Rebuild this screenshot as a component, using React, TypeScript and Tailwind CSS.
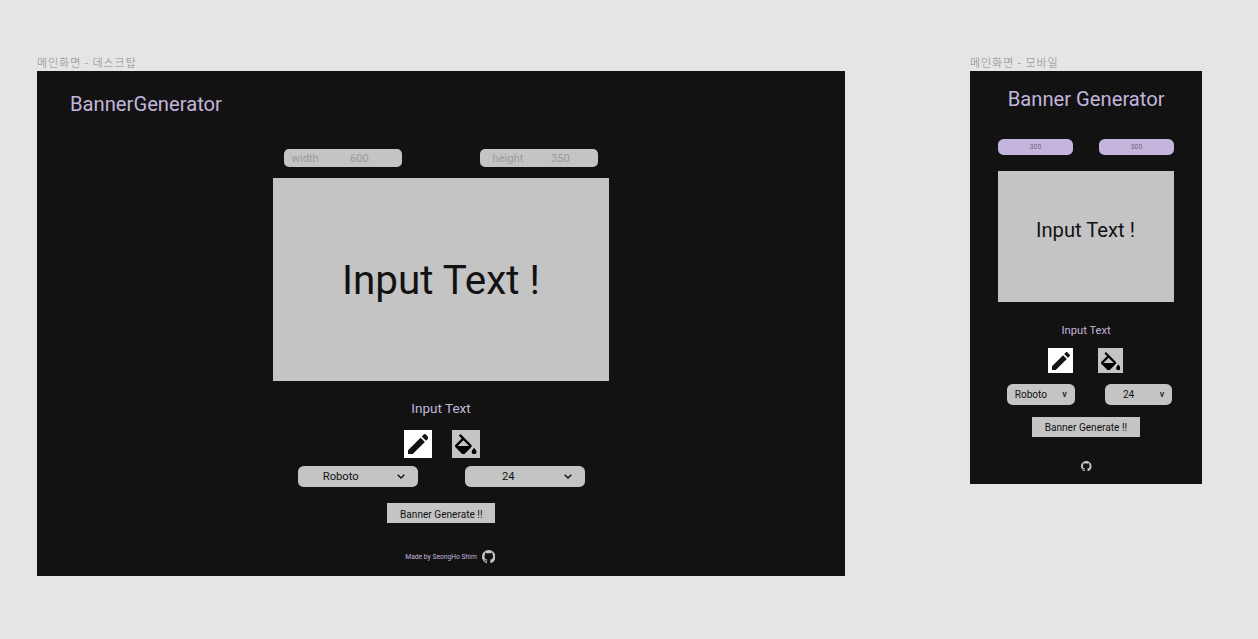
import type { ReactNode } from 'react';

function PencilIcon({ className }: { className: string }) {
  return (
    <svg viewBox="3 3 18 18" className={className} fill="#121212">
      <path d="M3 17.25V21h3.75L17.81 9.94l-3.75-3.75L3 17.25zM20.71 7.04a1 1 0 0 0 0-1.41l-2.34-2.34a1 1 0 0 0-1.41 0l-1.83 1.83 3.75 3.75 1.83-1.83z" />
    </svg>
  );
}

function FillIcon({ className }: { className: string }) {
  return (
    <svg viewBox="3 0 18 17" className={className} fill="#000">
      <path d="M16.56 8.94L7.62 0 6.21 1.41l2.38 2.38-5.15 5.15a1.49 1.49 0 0 0 0 2.12l5.5 5.5c.29.29.68.44 1.06.44s.77-.15 1.06-.44l5.5-5.5c.59-.58.59-1.53 0-2.12zM5.21 10L10 5.21 14.79 10H5.21zM19 11.5s-2 2.17-2 3.5c0 1.1.9 2 2 2s2-.9 2-2c0-1.33-2-3.5-2-3.5z" />
    </svg>
  );
}

function GithubIcon({ className }: { className: string }) {
  return (
    <svg viewBox="0 0 16 16" className={className} fill="#c4c4c4">
      <path d="M8 0C3.58 0 0 3.58 0 8c0 3.54 2.29 6.53 5.47 7.59.4.07.55-.17.55-.38 0-.19-.01-.82-.01-1.49-2.01.37-2.53-.49-2.69-.94-.09-.23-.48-.94-.82-1.13-.28-.15-.68-.52-.01-.53.63-.01 1.08.58 1.23.82.72 1.21 1.87.87 2.33.66.07-.52.28-.87.51-1.07-1.78-.2-3.64-.89-3.64-3.95 0-.87.31-1.59.82-2.15-.08-.2-.36-1.02.08-2.12 0 0 .67-.21 2.2.82.64-.18 1.32-.27 2-.27s1.36.09 2 .27c1.53-1.04 2.2-.82 2.2-.82.44 1.1.16 1.92.08 2.12.51.56.82 1.27.82 2.15 0 3.07-1.87 3.75-3.65 3.95.29.25.54.73.54 1.48 0 1.07-.01 1.93-.01 2.2 0 .21.15.46.55.38A8.01 8.01 0 0 0 16 8c0-4.42-3.58-8-8-8z" />
    </svg>
  );
}

function Chevron({ className }: { className: string }) {
  return (
    <svg viewBox="0 0 8 5" className={className} fill="none" stroke="#121212" strokeWidth="1.4">
      <path d="M.7.7 4 4 7.3.7" />
    </svg>
  );
}

function Frame({ name, children }: { name: string; children: ReactNode }) {
  return (
    <section>
      <h2 className="h-[16px] whitespace-nowrap font-['Noto_Sans_CJK_KR',sans-serif] text-[11px] font-light leading-[15px] tracking-[0.93px] text-[#858585]">
        {name}
      </h2>
      {children}
    </section>
  );
}

function Desktop() {
  return (
    <div className="flex h-[505px] w-[808px] flex-col bg-[#121212] pt-[22px]">
      <h1 className="ml-[33px] h-6 text-[20.2px] leading-[23px] text-[#c4b5dd]">BannerGenerator</h1>
      <div className="ml-[247px] mt-[32px] flex gap-[77.5px] text-[11.2px] leading-[19px] text-[#9b9b9b]">
        <div className="flex h-[17.5px] w-[118px] rounded-[5px] bg-[#c4c4c4] pl-[7.5px]">
          <span className="w-[58.5px]">width</span>
          <span>600</span>
        </div>
        <div className="flex h-[17.5px] w-[118px] rounded-[5px] bg-[#c4c4c4] pl-[13px]">
          <span className="w-[58.5px]">height</span>
          <span>350</span>
        </div>
      </div>
      <div className="ml-[235.6px] mt-[11.9px] flex h-[202.6px] w-[336.7px] items-center justify-center bg-[#c4c4c4] pt-[2px] text-[40.4px] leading-[48px] text-[#121212]">
        Input Text !
      </div>
      <p className="mt-[19px] h-4 w-[808px] text-center text-[13.5px] leading-4 text-[#c4b5dd]">Input Text</p>
      <div className="ml-[367px] mt-[14px] flex gap-[19.4px]">
        <button className="flex size-[28.3px] items-center justify-center bg-white">
          <PencilIcon className="size-[20.5px]" />
        </button>
        <button className="flex size-[28.3px] items-center justify-center bg-[#c4c4c4]">
          <FillIcon className="h-[20.5px] w-[21.5px]" />
        </button>
      </div>
      <div className="ml-[261.3px] mt-[7.4px] flex gap-[47.3px] text-[11.2px] leading-[21.5px] text-[#121212]">
        <div className="flex h-[21.5px] w-[119.8px] items-center rounded-[5.6px] bg-[#c4c4c4] pl-[24.5px]">
          <span className="w-[74.5px]">Roboto</span>
          <Chevron className="h-[5px] w-[8px]" />
        </div>
        <div className="flex h-[21.5px] w-[119.8px] items-center rounded-[5.6px] bg-[#c4c4c4] pl-[36.5px]">
          <span className="w-[62.5px]">24</span>
          <Chevron className="h-[5px] w-[8px]" />
        </div>
      </div>
      <button className="ml-[350.2px] mt-[15.8px] h-[19.7px] w-[108.2px] bg-[#c4c4c4] pt-[2px] text-[10.1px] leading-[20px] text-[#121212]">
        Banner Generate !!
      </button>
      <footer className="ml-[368.3px] mt-[26.8px] flex h-[14px] items-center gap-[5px] text-[6.73px] leading-[14px] text-[#c4b5dd]">
        <span className="pt-[2px]">Made by SeongHo Shim</span>
        <GithubIcon className="size-[13.5px]" />
      </footer>
    </div>
  );
}

function Mobile() {
  return (
    <div className="flex h-[413px] w-[232.3px] flex-col bg-[#121212] pt-[16px]">
      <h1 className="h-6 text-center text-[20.2px] leading-6 text-[#c4b5dd]">Banner Generator</h1>
      <div className="ml-[28px] mt-[28.3px] flex gap-[26px] text-center text-[6.73px] leading-[17.5px] text-[#6d6780]">
        <div className="h-[16px] w-[75px] rounded-[5.6px] bg-[#c4b5dd]">300</div>
        <div className="h-[16px] w-[75px] rounded-[5.6px] bg-[#c4b5dd]">300</div>
      </div>
      <div className="ml-[28px] mt-[16px] flex h-[130.8px] w-[175.8px] justify-center bg-[#c4c4c4] pr-px pt-[47px] text-[20.2px] leading-6 text-[#121212]">
        Input Text !
      </div>
      <p className="mt-[21px] h-4 text-center text-[11.2px] leading-4 text-[#c4b5dd]">Input Text</p>
      <div className="ml-[78px] mt-[9px] flex gap-[24.5px]">
        <button className="flex size-[25.4px] items-center justify-center bg-white">
          <PencilIcon className="size-[18px]" />
        </button>
        <button className="flex size-[25.4px] items-center justify-center bg-[#c4c4c4]">
          <FillIcon className="h-[18.5px] w-[19.5px]" />
        </button>
      </div>
      <div className="ml-[37px] mt-[10.5px] flex gap-[30px] text-[10.1px] leading-[21.5px] text-[#121212]">
        <div className="flex h-[21.5px] w-[67.5px] rounded-[5.6px] bg-[#c4c4c4] pl-[7.7px]">
          <span className="w-[47.5px]">Roboto</span>
          <span className="text-[9px] font-medium">v</span>
        </div>
        <div className="flex h-[21.5px] w-[67.5px] rounded-[5.6px] bg-[#c4c4c4] pl-[18.4px]">
          <span className="w-[36.8px]">24</span>
          <span className="text-[9px] font-medium">v</span>
        </div>
      </div>
      <button className="ml-[61.8px] mt-[11.5px] h-[19.7px] w-[108.2px] bg-[#c4c4c4] pt-px text-[10.1px] leading-[20px] text-[#121212]">
        Banner Generate !!
      </button>
      <GithubIcon className="ml-[111px] mt-[24px] size-[10.5px]" />
    </div>
  );
}

export default function App() {
  return (
    <main className="flex h-[639px] w-[1258px] items-start gap-[125px] overflow-hidden bg-[#e5e5e5] pl-[37px] pt-[55px] font-[Roboto,sans-serif]">
      <Frame name="메인화면 - 데스크탑">
        <Desktop />
      </Frame>
      <Frame name="메인화면 - 모바일">
        <Mobile />
      </Frame>
    </main>
  );
}
